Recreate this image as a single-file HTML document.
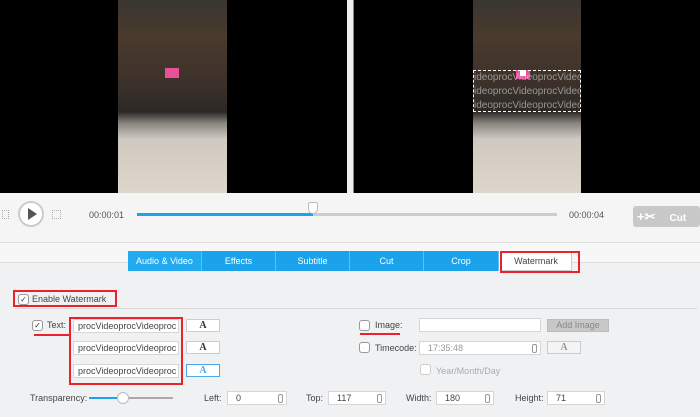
<!DOCTYPE html>
<html><head><style>
*{margin:0;padding:0;box-sizing:border-box}
body{width:700px;height:417px;overflow:hidden;background:#f7f7f7;font-family:"Liberation Sans",sans-serif;font-size:9px;color:#444;position:relative}
.a{position:absolute}
.vid{background:linear-gradient(180deg,#3a3632 0%,#4a3a2c 20%,#3b302a 45%,#2c2826 58%,#8a8680 64%,#cfc9c0 72%,#dcd6cc 100%)}
.in{position:absolute;background:#fff;border:1px solid #d6d6d6;height:14px;font-size:9px;line-height:12px;padding-left:8px;color:#444}
.btnA{position:absolute;background:#fff;border:1px solid #ccc;width:34px;height:13px;text-align:center;font:bold 10px "Liberation Serif",serif;line-height:11px;color:#333}
.cb{position:absolute;width:11px;height:11px;border:1px solid #999;border-radius:3px;background:#fff;font-size:8px;line-height:9px;text-align:center;color:#333}
.tab{position:absolute;top:251px;height:20px;background:#1aa3ea;color:#fff;font-size:9px;line-height:20px;text-align:center;border-right:1px solid #5ec0f0}
.spin{position:absolute;right:3px;top:2px;width:5px;height:9px;border:1px solid #999;border-radius:2px}
</style></head><body>
<div class="a" style="left:0;top:0;width:347px;height:193px;background:#000"></div>
<div class="a vid" style="left:118px;top:0;width:109px;height:193px"></div>
<div class="a" style="left:165px;top:68px;width:14px;height:10px;background:#e8509a"></div>
<div class="a" style="left:347px;top:0;width:6px;height:193px;background:#eee"></div>
<div class="a" style="left:353px;top:0;width:347px;height:193px;background:#000;border-left:1px solid #888"></div>
<div class="a vid" style="left:473px;top:0;width:108px;height:193px"></div>
<div class="a" style="left:516px;top:70px;width:14px;height:9px;background:#e8509a"></div>
<div class="a" style="left:473px;top:70px;width:108px;height:42px;border:1px dashed #fff;color:rgba(220,220,220,.6);font-size:10px;line-height:14px;overflow:hidden;white-space:nowrap">ideoprocVideoprocVideoproc<br>ideoprocVideoprocVideoproc<br>ideoprocVideoprocVideoproc</div>
<div class="a" style="left:520px;top:70px;width:6px;height:6px;background:#fff"></div>
<!-- control bar -->
<div class="a" style="left:0;top:193px;width:700px;height:50px;background:#f5f5f5;border-bottom:1px solid #e0e0e0"></div>
<div class="a" style="left:2px;top:210px;width:7px;height:9px;border:1px dotted #aaa"></div>
<div class="a" style="left:52px;top:210px;width:9px;height:9px;border:1px dotted #aaa"></div>
<div class="a" style="left:18px;top:201px;width:26px;height:26px;border-radius:50%;background:#fff;border:2px solid #ccc"></div>
<div class="a" style="left:28px;top:208px;width:0;height:0;border-left:9px solid #555;border-top:6px solid transparent;border-bottom:6px solid transparent"></div>
<div class="a" style="left:89px;top:210px;font-size:9px;color:#555">00:00:01</div>
<div class="a" style="left:137px;top:213px;width:420px;height:3px;background:#ccc"></div>
<div class="a" style="left:137px;top:213px;width:176px;height:3px;background:#1aa3ea"></div>
<div class="a" style="left:308px;top:202px;width:10px;height:12px;background:#fff;border:1px solid #bbb;border-radius:2px 2px 5px 5px"></div>
<div class="a" style="left:569px;top:210px;font-size:9px;color:#555">00:00:04</div>
<div class="a" style="left:633px;top:206px;width:67px;height:21px;background:#c8c8c8;border-radius:3px;color:#fff;font-size:10px;font-weight:bold;line-height:21px"><span style="margin-left:4px;font-size:13px">+✂</span><span style="margin-left:14px">Cut</span></div>
<!-- panel -->
<div class="a" style="left:0;top:262px;width:700px;height:155px;background:#f0f1f3;border-top:1px solid #ddd"></div>
<div class="tab" style="left:128px;width:74px;background:#22aaf0">Audio &amp; Video</div>
<div class="tab" style="left:202px;width:74px">Effects</div>
<div class="tab" style="left:276px;width:74px">Subtitle</div>
<div class="tab" style="left:350px;width:74px">Cut</div>
<div class="tab" style="left:424px;width:75px">Crop</div>
<div class="a" style="left:500px;top:251px;width:72px;height:20px;background:#fff;border:1px solid #ccc;text-align:center;line-height:18px;color:#444">Watermark</div>
<div class="a" style="left:500px;top:251px;width:80px;height:22px;border:2px solid #e8242a"></div>
<div class="a" style="left:13px;top:290px;width:104px;height:17px;border:2px solid #e8242a"></div>
<div class="cb" style="left:18px;top:294px">✓</div>
<div class="a" style="left:32px;top:294px">Enable Watermark</div>
<div class="a" style="left:15px;top:308px;width:682px;height:1px;background:#d8d8d8"></div>
<div class="cb" style="left:32px;top:320px">✓</div>
<div class="a" style="left:47px;top:320px">Text:</div>
<div class="a" style="left:34px;top:334px;width:36px;height:2px;background:#e8242a"></div>
<div class="a" style="left:69px;top:317px;width:114px;height:68px;border:2px solid #e8242a"></div>
<div class="in" style="left:73px;top:319px;width:106px;padding-left:4px;overflow:hidden;white-space:nowrap">procVideoprocVideoproc</div>
<div class="in" style="left:73px;top:341px;width:106px;padding-left:4px;overflow:hidden;white-space:nowrap">procVideoprocVideoproc</div>
<div class="in" style="left:73px;top:364px;width:106px;padding-left:4px;overflow:hidden;white-space:nowrap">procVideoprocVideoproc</div>
<div class="btnA" style="left:186px;top:319px">A</div>
<div class="btnA" style="left:186px;top:341px">A</div>
<div class="btnA" style="left:186px;top:364px;border-color:#4aa8e8;color:#4aa8e8">A</div>
<div class="a" style="left:30px;top:393px">Transparency:</div>
<div class="a" style="left:89px;top:397px;width:34px;height:2px;background:#1aa3ea"></div>
<div class="a" style="left:123px;top:397px;width:50px;height:2px;background:#aaa"></div>
<div class="a" style="left:117px;top:392px;width:12px;height:12px;border-radius:50%;background:#fff;border:1px solid #bbb"></div>
<div class="a" style="left:204px;top:393px">Left:</div>
<div class="in" style="left:227px;top:391px;width:60px">0<div class="spin"></div></div>
<div class="a" style="left:306px;top:393px">Top:</div>
<div class="in" style="left:328px;top:391px;width:58px">117<div class="spin"></div></div>
<div class="a" style="left:406px;top:393px">Width:</div>
<div class="in" style="left:436px;top:391px;width:58px">180<div class="spin"></div></div>
<div class="a" style="left:515px;top:393px">Height:</div>
<div class="in" style="left:547px;top:391px;width:58px">71<div class="spin"></div></div>
<div class="cb" style="left:359px;top:320px"></div>
<div class="a" style="left:375px;top:320px">Image:</div>
<div class="a" style="left:360px;top:333px;width:40px;height:2px;background:#e8242a"></div>
<div class="in" style="left:419px;top:318px;width:122px"></div>
<div class="a" style="left:547px;top:319px;width:62px;height:13px;background:#c8c8c8;border:1px solid #bbb;color:#888;text-align:center;line-height:11px">Add Image</div>
<div class="cb" style="left:359px;top:342px"></div>
<div class="a" style="left:375px;top:343px">Timecode:</div>
<div class="in" style="left:419px;top:341px;width:122px;color:#999">17:35:48<div class="spin"></div></div>
<div class="btnA" style="left:547px;top:341px;border-color:#ccc;color:#999;background:#f4f4f4">A</div>
<div class="cb" style="left:420px;top:364px;border-color:#ccc"></div>
<div class="a" style="left:436px;top:366px;color:#aaa">Year/Month/Day</div>
</body></html>
